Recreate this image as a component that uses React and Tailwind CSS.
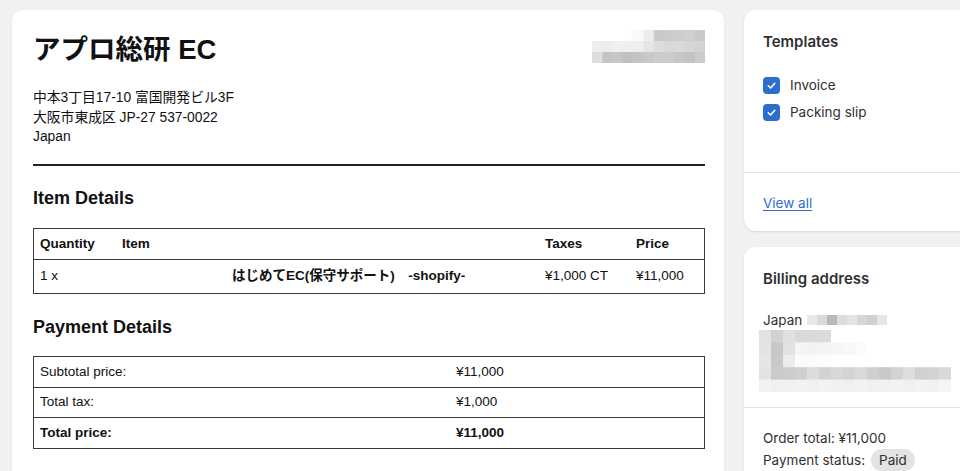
import React from "react";

const topMosaic = [
  ["#ffffff", "#ffffff", "#ffffff", "#fdfdfd", "#fafafa", "#ececec", "#cacaca", "#cbcbcb", "#cdcdcd", "#d0d0d0", "#cacaca"],
  ["#eeeeee", "#ececec", "#f0f0f0", "#efefef", "#eeeeee", "#e5e5e5", "#dcdcdc", "#d8d8d8", "#dadada", "#d6d6d6", "#d3d3d3"],
  ["#dedede", "#c4c4c4", "#c6c6c6", "#c0c0c0", "#c4c4c4", "#c8c8c8", "#cccccc", "#cbcbcb", "#c6c6c6", "#c3c3c3", "#cccccc"],
];

const billMosaic = [
  ["#e2e2e2", "#d2d2d2", "#e0e0e0", "#d9d9d9", "#dadada", "#dcdcdc", "#ffffff", "#ffffff", "#ffffff", "#ffffff", "#ffffff", "#ffffff", "#ffffff", "#ffffff", "#ffffff", "#ffffff"],
  ["#e4e4e4", "#c8c8c8", "#e2e2e2", "#f5f5f5", "#f3f3f3", "#f4f4f4", "#f6f6f6", "#f8f8f8", "#fbfbfb", "#ffffff", "#ffffff", "#ffffff", "#ffffff", "#ffffff", "#ffffff", "#ffffff"],
  ["#e6e6e6", "#c9c9c9", "#ececec", "#fbfbfb", "#fcfcfc", "#fdfdfd", "#ffffff", "#ffffff", "#ffffff", "#ffffff", "#ffffff", "#ffffff", "#ffffff", "#ffffff", "#ffffff", "#ffffff"],
  ["#e3e3e3", "#cbcbcb", "#cccccc", "#cfcfcf", "#dcdcdc", "#d2d2d2", "#d8d8d8", "#d4d4d4", "#dadada", "#cfcfcf", "#c9c9c9", "#d3d3d3", "#dedede", "#d0d0d0", "#d2d2d2", "#dadada"],
  ["#f3f3f3", "#f0f0f0", "#f1f1f1", "#f2f2f2", "#f0f0f0", "#f3f3f3", "#f1f1f1", "#f0f0f0", "#f2f2f2", "#f0f0f0", "#f1f1f1", "#f2f2f2", "#f0f0f0", "#f3f3f3", "#f1f1f1", "#f5f5f5"],
];

const japanMosaic = ["#e8e8e8", "#dadada", "#b8b8b8", "#dcdcdc", "#e4e4e4", "#d6d6d6", "#cfcfcf", "#e6e6e6"];

function Mosaic({ rows, cw, ch, className }) {
  const w = rows[0].length * cw;
  const h = rows.length * ch;
  return (
    <svg width={w} height={h} className={className} viewBox={`0 0 ${w} ${h}`}>
      {rows.map((r, y) =>
        r.map((c, x) => (
          <rect key={`${x}-${y}`} x={x * cw} y={y * ch} width={cw + 0.5} height={ch + 0.5} fill={c} />
        ))
      )}
    </svg>
  );
}

function Check() {
  return (
    <span className="flex h-[17px] w-[17px] items-center justify-center rounded-[4px] bg-[#2c6ecb]">
      <svg width="11" height="11" viewBox="0 0 12 12" fill="none">
        <path d="M2.5 6.3 L5 8.7 L9.6 3.6" stroke="#fff" strokeWidth="1.8" strokeLinecap="round" strokeLinejoin="round" />
      </svg>
    </span>
  );
}

export default function App() {
  const docFont = { fontFamily: '"Liberation Sans", Arial, "Noto Sans CJK JP", sans-serif' };
  const uiFont = { fontFamily: 'Inter, "Noto Sans", "Noto Sans CJK JP", sans-serif' };
  return (
    <div className="flex h-[471px] w-[960px] gap-[20px] overflow-hidden bg-[#f1f1f1] pl-[12px] pt-[10px]">
      {/* Left invoice card */}
      <div
        className="flex w-[712px] shrink-0 flex-col rounded-t-[12px] bg-white pl-[21px] pr-[19px] pt-[23px] text-[#111] shadow-[0_1px_2px_rgba(0,0,0,0.08)]"
        style={docFont}
      >
        <div className="flex items-start justify-between">
          <h1 className="text-[27.5px] font-bold leading-[34px]">アプロ総研 EC</h1>
          <Mosaic rows={topMosaic} cw={10.3} ch={11} className="mt-[-3px]" />
        </div>
        <div className="mt-[21px] text-[13.8px] leading-[19px]">
          <div>中本3丁目17-10 富国開発ビル3F</div>
          <div className="mt-[1px]">大阪市東成区 JP-27 537-0022</div>
          <div>Japan</div>
        </div>
        <div className="mt-[18px] h-[2px] bg-[#222]" />

        <h2 className="mt-[21px] text-[18px] font-bold leading-[22px]">Item Details</h2>
        <div className="mt-[19px] border border-[#3a3a3a] text-[13.5px]">
          <div className="flex h-[31px] items-center border-b border-[#3a3a3a] font-bold">
            <div className="w-[81px] pl-[6px]">Quantity</div>
            <div className="w-[424px] pl-[7px]">Item</div>
            <div className="w-[91px] pl-[6px]">Taxes</div>
            <div className="flex-1 pl-[6px]">Price</div>
          </div>
          <div className="flex h-[33px] items-center">
            <div className="w-[81px] pl-[6px]">1 x</div>
            <div className="w-[424px] pl-[117px] font-bold">はじめてEC(保守サポート)　-shopify-</div>
            <div className="w-[91px] pl-[6px]">¥1,000 CT</div>
            <div className="flex-1 pl-[6px]">¥11,000</div>
          </div>
        </div>

        <h2 className="mt-[22px] text-[18px] font-bold leading-[22px]">Payment Details</h2>
        <div className="mt-[18px] border border-[#3a3a3a] text-[13.5px]">
          <div className="flex h-[31px] items-center border-b border-[#3a3a3a]">
            <div className="w-[415px] pl-[6px]">Subtotal price:</div>
            <div className="flex-1 pl-[7px]">¥11,000</div>
          </div>
          <div className="flex h-[30px] items-center border-b border-[#3a3a3a]">
            <div className="w-[415px] pl-[6px]">Total tax:</div>
            <div className="flex-1 pl-[7px]">¥1,000</div>
          </div>
          <div className="flex h-[30px] items-center font-bold">
            <div className="w-[415px] pl-[6px]">Total price:</div>
            <div className="flex-1 pl-[7px]">¥11,000</div>
          </div>
        </div>
      </div>

      {/* Right column */}
      <div className="flex w-[250px] shrink-0 flex-col gap-[16px] text-[#303030]" style={uiFont}>
        <div className="flex flex-col rounded-[12px] bg-white shadow-[0_1px_2px_rgba(0,0,0,0.1)]">
          <div className="h-[163px] border-b border-[#e3e3e3] px-[19px] pt-[22px]">
            <div className="text-[15px] font-semibold leading-[20px]">Templates</div>
            <div className="mt-[25px] flex flex-col gap-[10px] text-[13.5px]">
              <label className="flex items-center gap-[10px] leading-[17px]">
                <Check />
                <span>Invoice</span>
              </label>
              <label className="flex items-center gap-[10px] leading-[17px]">
                <Check />
                <span>Packing slip</span>
              </label>
            </div>
          </div>
          <div className="flex h-[58px] items-center px-[19px] pt-[2px]">
            <a className="text-[13.5px] text-[#2c6ecb] underline underline-offset-2">View all</a>
          </div>
        </div>

        <div className="flex flex-col rounded-t-[12px] bg-white shadow-[0_1px_2px_rgba(0,0,0,0.1)]">
          <div className="border-b border-[#e3e3e3] pb-[15px] pl-[15px] pt-[22px]">
            <div className="pl-[4px] text-[15px] font-semibold leading-[20px]">Billing address</div>
            <div className="mt-[22px] flex items-center pl-[4px] text-[13.5px] leading-[18px]">
              <span>Japan</span>
              <Mosaic rows={[japanMosaic]} cw={10} ch={10} className="ml-[5px]" />
            </div>
            <Mosaic rows={billMosaic} cw={12} ch={12.4} className="mt-[1px]" />
          </div>
          <div className="px-[19px] pt-[20px] text-[13.5px]">
            <div className="leading-[20px]">Order total: ¥11,000</div>
            <div className="mt-[1px] flex items-center gap-[6px] leading-[22px]">
              <span>Payment status:</span>
              <span className="rounded-full bg-[#e3e3e3] px-[8px] leading-[22px]">Paid</span>
            </div>
          </div>
        </div>
      </div>
    </div>
  );
}
